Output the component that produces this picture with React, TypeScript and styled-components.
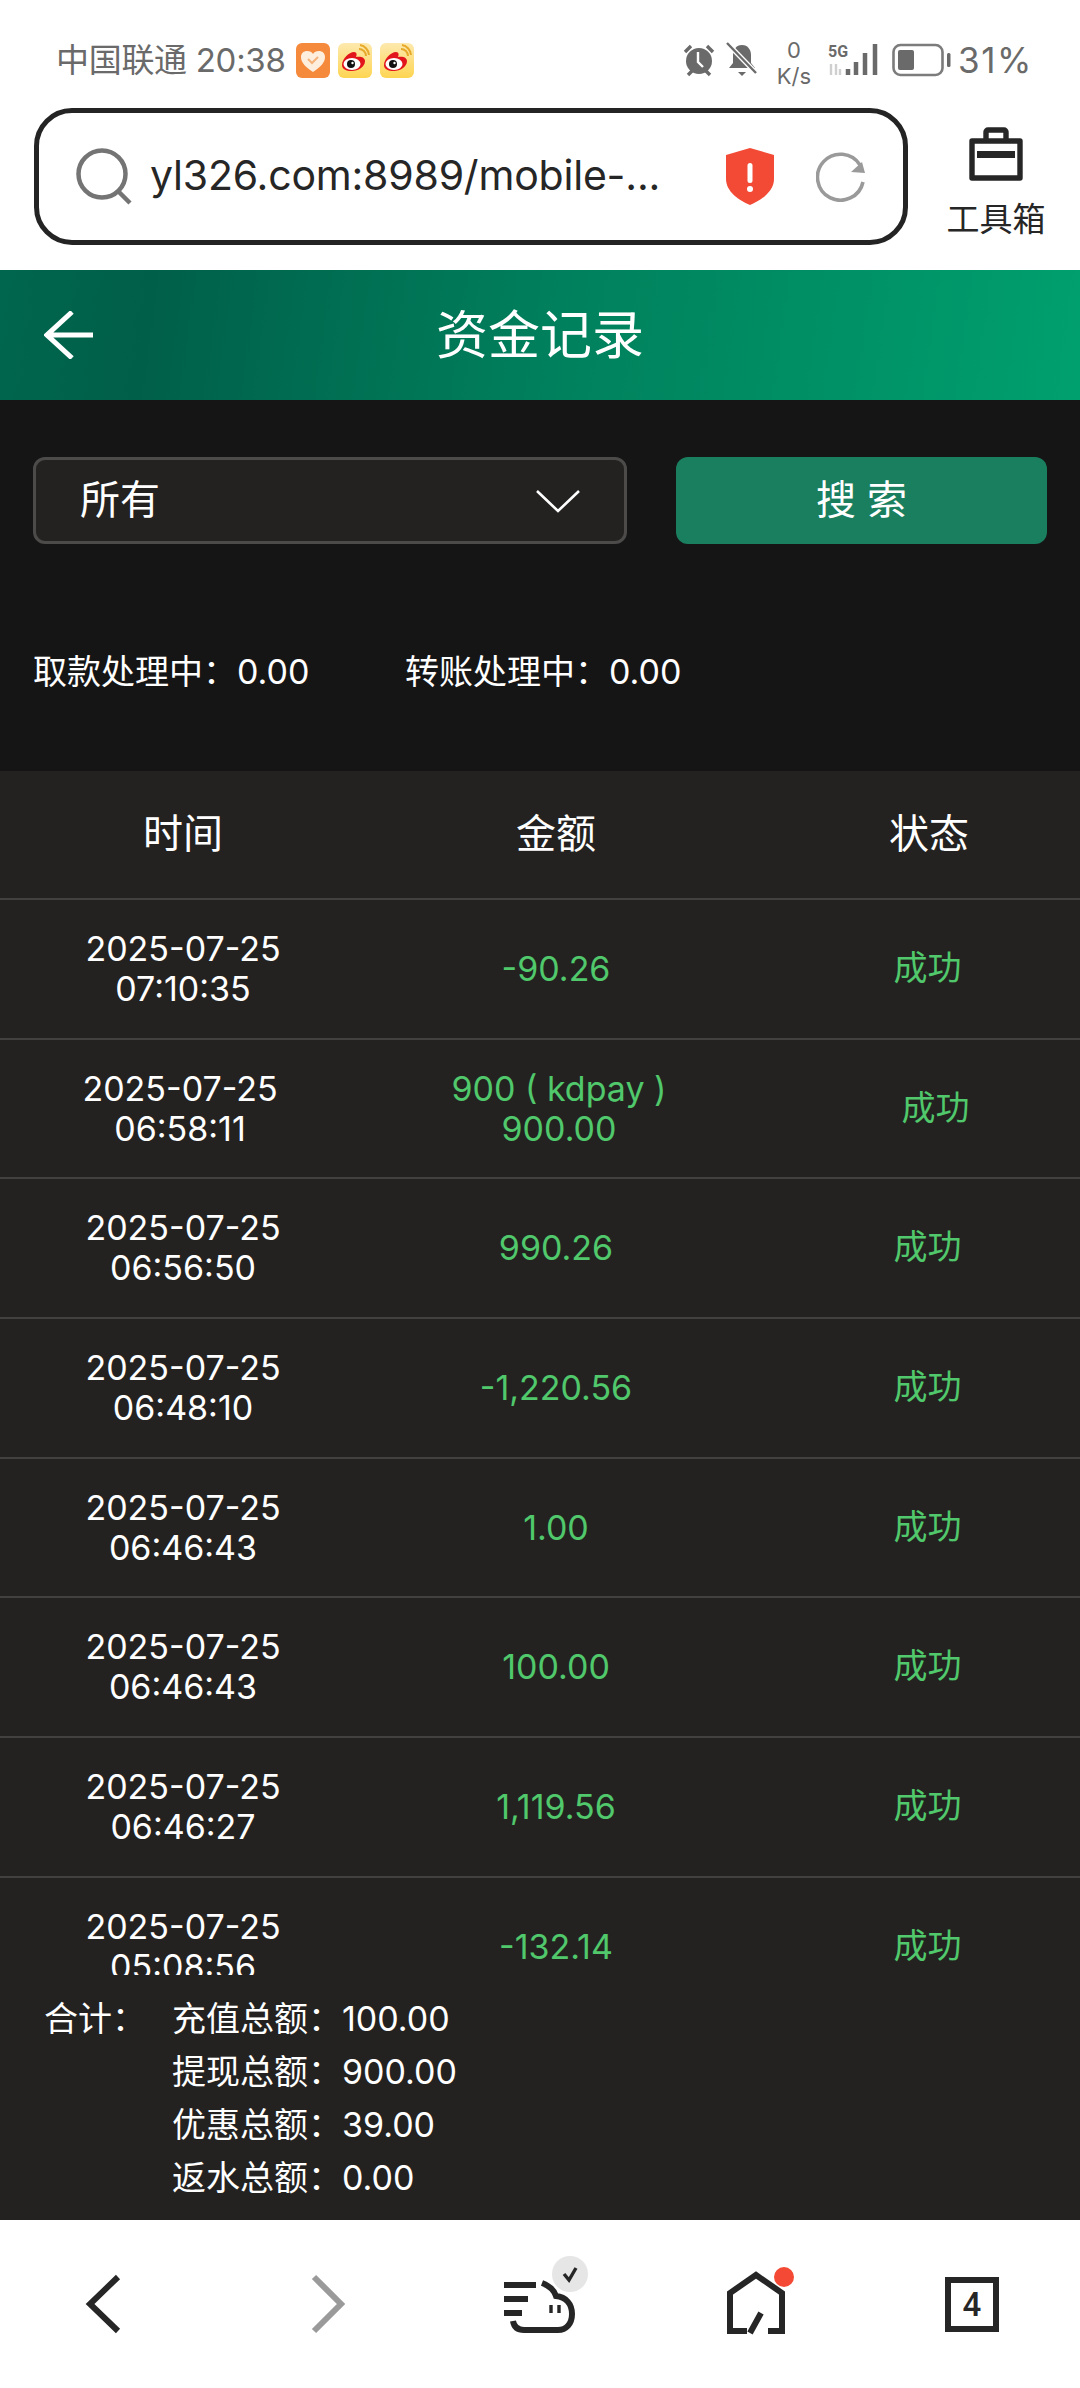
import React from 'react';
import styled, { createGlobalStyle } from 'styled-components';

const GlobalStyle = createGlobalStyle`
  html, body {
    margin: 0;
    padding: 0;
    background: #fff;
  }
  * {
    box-sizing: border-box;
  }
`;

const FONT = `Inter, "Noto Sans CJK SC", sans-serif`;

const Screen = styled.div`
  width: 1080px;
  height: 2388px;
  display: flex;
  flex-direction: column;
  overflow: hidden;
  font-family: ${FONT};
  background: #fff;
`;

const StatusBar = styled.div`
  height: 100px;
  padding: 20px 47px 0 56px;
  display: flex;
  align-items: center;
  justify-content: space-between;
  color: #6a6a6a;
`;

const StatusGroup = styled.div`
  display: flex;
  align-items: center;
`;

const Carrier = styled.span`
  font-size: 33px;
  line-height: 40px;
  margin-right: 10px;
  letter-spacing: -0.3px;
`;

const AppBadge = styled.svg`
  width: 34px;
  height: 35px;
  margin-right: 8px;
  display: block;
`;

const Speed = styled.div`
  width: 40px;
  margin: 6px 14px 0 16px;
  display: flex;
  flex-direction: column;
  align-items: center;
  font-size: 22px;
  line-height: 26px;
`;

const BatteryText = styled.span`
  font-size: 35px;
  line-height: 40px;
  margin-left: 6px;
  letter-spacing: 1.6px;
`;

const BrowserBar = styled.div`
  height: 170px;
  padding: 8px 0 0 34px;
  display: flex;
`;

const UrlBox = styled.div`
  width: 874px;
  height: 137px;
  border: 5px solid #242424;
  border-radius: 38px;
  padding: 0 37px 0 37px;
  display: flex;
  align-items: center;
`;

const UrlText = styled.span`
  flex: 1;
  margin: 0 0 4px 17px;
  font-size: 41px;
  color: #262626;
  white-space: nowrap;
  letter-spacing: -0.2px;
`;

const ToolBox = styled.div`
  flex: 1;
  display: flex;
  flex-direction: column;
  align-items: center;
  padding-top: 19px;
  padding-left: 4px;
  color: #262626;
  font-size: 33px;
`;

const ToolLabel = styled.span`
  line-height: 40px;
  margin-top: 18px;
`;

const PageHeader = styled.header`
  height: 130px;
  flex: none;
  position: relative;
  padding-bottom: 8px;
  display: flex;
  align-items: center;
  justify-content: center;
  color: #fff;
  font-size: 52px;
  background: linear-gradient(98deg, #00664e 0%, #005f49 14%, #007f5c 50%, #00a06e 100%);
`;

const BackButton = styled.svg`
  position: absolute;
  left: 44px;
  top: 41px;
  width: 50px;
  height: 48px;
`;

const FilterPanel = styled.section`
  height: 371px;
  flex: none;
  background: #161516;
  padding: 57px 0 0 33px;
  color: #fff;
`;

const FilterRow = styled.div`
  display: flex;
  gap: 49px;
`;

const SelectBox = styled.div`
  width: 594px;
  height: 87px;
  background: #232221;
  border: 3px solid #4c4b4a;
  border-radius: 12px;
  padding: 0 44px 0 44px;
  display: flex;
  align-items: center;
  justify-content: space-between;
  font-size: 40px;
`;

const SelectLabel = styled.span`
  margin-bottom: 8px;
`;

const SearchButton = styled.button`
  width: 371px;
  height: 87px;
  padding: 0 0 8px;
  border: none;
  border-radius: 12px;
  background: #1a7f5f;
  color: #fff;
  font-family: ${FONT};
  font-size: 40px;
`;

const Pending = styled.div`
  margin-top: 108px;
  display: flex;
  font-size: 34px;
  line-height: 40px;
`;

const PendingItem = styled.span`
  width: 372px;
`;

const TableHead = styled.div`
  height: 129px;
  flex: none;
  background: #232221;
  border-bottom: 2px solid #424140;
  padding-bottom: 8px;
  color: #fff;
  font-size: 40px;
  display: grid;
  grid-template-columns: 366px 380px 366px;
  align-items: center;
  text-align: center;
`;

const TableBody = styled.div`
  height: 1075px;
  flex: none;
  background: #232221;
  overflow: hidden;
`;

const Row = styled.div<{ $columns: string }>`
  height: 139.7px;
  border-bottom: 2px solid #424140;
  display: grid;
  grid-template-columns: ${(p) => p.$columns};
  align-items: center;
  text-align: center;
  font-size: 34px;
  line-height: 40px;
`;

const TimeCell = styled.div`
  color: #fff;
`;

const AmountCell = styled.div`
  color: #50c86b;
`;

const StateCell = styled.div`
  color: #50c86b;
  font-size: 34px;
  margin: 0 3px 2px 0;
`;

const Summary = styled.footer`
  height: 245px;
  flex: none;
  background: #232221;
  color: #fff;
  padding: 17px 0 0 44px;
  display: flex;
  font-size: 34px;
  line-height: 53px;
`;

const SummaryTitle = styled.div`
  width: 128px;
`;

const SummaryLine = styled.div`
  white-space: nowrap;
`;

const BottomNav = styled.nav`
  height: 168px;
  flex: none;
  background: #fff;
  display: grid;
  grid-template-columns: repeat(5, 1fr);
  align-items: center;
  justify-items: center;
`;

const NavIcon = styled.svg`
  width: 100px;
  height: 100px;
  display: block;
`;

const Weibo = () => (
  <AppBadge viewBox="0 0 34 35">
    <defs>
      <linearGradient id="wb" x1="0" y1="0" x2="0" y2="1">
        <stop offset="0" stopColor="#fde9ae" />
        <stop offset="1" stopColor="#fed552" />
      </linearGradient>
    </defs>
    <rect width="34" height="35" rx="6" fill="url(#wb)" />
    <path d="M4 22c0-6 7-13 12-13 3 0 3 3 2 5 4-1 9 0 9 4 0 6-7 10-13 10S4 26 4 22z" fill="#e3151c" />
    <ellipse cx="14" cy="21" rx="8.5" ry="6" fill="#fff" />
    <circle cx="13" cy="21" r="4" fill="#111" />
    <circle cx="14.5" cy="20" r="1.2" fill="#fff" />
    <path d="M21 6a7 7 0 0 1 7 7M22 2a11 11 0 0 1 9 10" fill="none" stroke="#e6a92a" strokeWidth="2" />
  </AppBadge>
);

const rows = [
  { time: ['2025-07-25', '07:10:35'], amount: ['-90.26'] },
  { time: ['2025-07-25', '06:58:11'], amount: ['900 ( kdpay )', '900.00'], columns: '360px 398px 358px' },
  { time: ['2025-07-25', '06:56:50'], amount: ['990.26'] },
  { time: ['2025-07-25', '06:48:10'], amount: ['-1,220.56'] },
  { time: ['2025-07-25', '06:46:43'], amount: ['1.00'] },
  { time: ['2025-07-25', '06:46:43'], amount: ['100.00'] },
  { time: ['2025-07-25', '06:46:27'], amount: ['1,119.56'] },
  { time: ['2025-07-25', '05:08:56'], amount: ['-132.14'] },
];

const totals = [
  ['充值总额：', '100.00'],
  ['提现总额：', '900.00'],
  ['优惠总额：', '39.00'],
  ['返水总额：', '0.00'],
];

const App: React.FC = () => {
  return (
    <Screen>
      <GlobalStyle />
      <StatusBar>
        <StatusGroup>
          <Carrier>中国联通 20:38</Carrier>
          <AppBadge viewBox="0 0 34 35">
            <rect width="34" height="35" rx="6" fill="#f58a3c" />
            <path d="M17 29C10 24 5 20 5 14c0-4 3-6 6-6 3 0 5 1 6 3 1-2 3-3 6-3 3 0 6 2 6 6 0 6-5 10-12 15z" fill="#fdeedd" />
            <path d="M12 16l4 4 6-6" fill="none" stroke="#f5b27a" strokeWidth="2" />
          </AppBadge>
          <Weibo />
          <Weibo />
        </StatusGroup>
        <StatusGroup>
          <svg width="34" height="34" viewBox="0 0 32 34">
            <circle cx="16" cy="18" r="13" fill="#6a6a6a" />
            <path d="M15 9v10l5 5" fill="none" stroke="#fff" strokeWidth="2.4" />
            <path d="M2 9l6-6M30 9l-6-6M5 32l4-4M27 32l-4-4" stroke="#6a6a6a" strokeWidth="3.4" />
          </svg>
          <svg width="32" height="36" viewBox="0 0 32 36" style={{ marginLeft: 10 }}>
            <path d="M16 3c6 0 9 5 9 10v8l4 5H3l4-5v-8c0-5 3-10 9-10z" fill="#6a6a6a" />
            <path d="M12 30h8l-4 4z" fill="#6a6a6a" />
            <path d="M1 1l29 30" stroke="#fff" strokeWidth="5" />
            <path d="M1 1l29 30" stroke="#6a6a6a" strokeWidth="2.4" />
          </svg>
          <Speed>
            <span>0</span>
            <span>K/s</span>
          </Speed>
          <svg width="52" height="34" viewBox="0 0 52 34">
            <text x="0" y="14" fontSize="16" fontWeight="700" fontFamily="Roboto, sans-serif" fill="#6a6a6a">5G</text>
            <path d="M3 32V21M8 32V21M12 32v-6" stroke="#cfcfcf" strokeWidth="2.4" />
            <path d="M20 32v-6M28 32V19M37 32V10M47 32V1" stroke="#6a6a6a" strokeWidth="4.5" />
          </svg>
          <svg width="60" height="34" viewBox="0 0 60 34" style={{ marginLeft: 12 }}>
            <rect x="1.5" y="2" width="49" height="30" rx="7" fill="none" stroke="#7c7c7c" strokeWidth="2.6" />
            <rect x="6" y="7" width="16" height="20" rx="2" fill="#6a6a6a" />
            <rect x="55" y="10" width="3.5" height="14" rx="1.5" fill="#6a6a6a" />
          </svg>
          <BatteryText>31%</BatteryText>
        </StatusGroup>
      </StatusBar>

      <BrowserBar>
        <UrlBox>
          <svg width="57" height="58" viewBox="0 0 57 58">
            <circle cx="26" cy="26" r="23.5" fill="none" stroke="#747474" strokeWidth="4.5" />
            <path d="M42 43l12 12" stroke="#747474" strokeWidth="4.5" />
          </svg>
          <UrlText>yl326.com:8989/mobile-...</UrlText>
          <svg width="48" height="57" viewBox="0 0 48 57" style={{ marginRight: 42 }}>
            <path d="M24 0l24 7v24c0 12-12 21-24 26C12 52 0 43 0 31V7z" fill="#f34a36" />
            <rect x="21.5" y="15" width="5" height="20" rx="2.5" fill="#fff" />
            <circle cx="24" cy="41" r="3" fill="#fff" />
          </svg>
          <svg width="50" height="50" viewBox="0 0 50 50">
            <path d="M47 30a23 23 0 1 1-3-17" fill="none" stroke="#9a9a9a" strokeWidth="3.6" />
            <path d="M35 20l14 1-3-11z" fill="#9a9a9a" />
          </svg>
        </UrlBox>
        <ToolBox>
          <svg width="54" height="54" viewBox="0 0 54 54">
            <path d="M3 14h48v37H3zM17 14V5a2 2 0 0 1 2-2h16a2 2 0 0 1 2 2v9" fill="none" stroke="#262626" strokeWidth="5.4" strokeLinejoin="round" />
            <rect x="8" y="24" width="38" height="7" fill="#262626" />
          </svg>
          <ToolLabel>工具箱</ToolLabel>
        </ToolBox>
      </BrowserBar>

      <PageHeader>
        <BackButton viewBox="0 0 50 48">
          <path d="M28 1L3 24l25 23M3 24h46" fill="none" stroke="#fff" strokeWidth="5" />
        </BackButton>
        资金记录
      </PageHeader>

      <FilterPanel>
        <FilterRow>
          <SelectBox>
            <SelectLabel>所有</SelectLabel>
            <svg width="44" height="24" viewBox="0 0 44 24">
              <path d="M1 2l21 20L43 2" fill="none" stroke="#fff" strokeWidth="2.6" />
            </svg>
          </SelectBox>
          <SearchButton>搜 索</SearchButton>
        </FilterRow>
        <Pending>
          <PendingItem>取款处理中：0.00</PendingItem>
          <PendingItem>转账处理中：0.00</PendingItem>
        </Pending>
      </FilterPanel>

      <TableHead>
        <div>时间</div>
        <div>金额</div>
        <div>状态</div>
      </TableHead>
      <TableBody>
        {rows.map((row, i) => (
          <Row key={i} $columns={row.columns || '366px 380px 366px'}>
            <TimeCell>
              {row.time.map((t) => (
                <div key={t}>{t}</div>
              ))}
            </TimeCell>
            <AmountCell>
              {row.amount.map((a) => (
                <div key={a}>{a}</div>
              ))}
            </AmountCell>
            <StateCell>成功</StateCell>
          </Row>
        ))}
      </TableBody>
      <Summary>
        <SummaryTitle>合计：</SummaryTitle>
        <div>
          {totals.map(([label, value]) => (
            <SummaryLine key={label}>
              {label}
              {value}
            </SummaryLine>
          ))}
        </div>
      </Summary>

      <BottomNav>
        <NavIcon viewBox="0 0 100 100">
          <path d="M62 23L34 50l0 0 28 27" fill="none" stroke="#262626" strokeWidth="6" transform="translate(-2 0)" />
        </NavIcon>
        <NavIcon viewBox="0 0 100 100">
          <path d="M40 23l27 27-27 27" fill="none" stroke="#9a9a9a" strokeWidth="6" />
        </NavIcon>
        <NavIcon viewBox="0 0 100 100">
          <path d="M14 31h32M14 45h24M14 59h18" stroke="#262626" strokeWidth="6" />
          <path d="M52 29c8 3 12 7 14 13 10 1 16 8 16 18 0 10-6 16-14 16H34c-6 0-10-3-11-9" fill="none" stroke="#262626" strokeWidth="6" />
          <path d="M61 51v8M69 51v8" stroke="#262626" strokeWidth="3.4" />
          <ellipse cx="80" cy="20" rx="18" ry="18" fill="#e6e6e6" />
          <path d="M74 20l5 6 7-12" fill="none" stroke="#262626" strokeWidth="3.4" />
        </NavIcon>
        <NavIcon viewBox="0 0 100 100">
          <path d="M41 77H24V39L50 21l0 0 26 18v38H62M55 59L44 79" fill="none" stroke="#262626" strokeWidth="6" />
          <circle cx="78" cy="23" r="10" fill="#f44a35" />
        </NavIcon>
        <NavIcon viewBox="0 0 100 100">
          <rect x="26" y="26" width="48" height="49" fill="none" stroke="#262626" strokeWidth="6" />
          <text x="50" y="62" textAnchor="middle" fontSize="33" fontFamily="Roboto, sans-serif" fontWeight="500" fill="#262626">4</text>
        </NavIcon>
      </BottomNav>
    </Screen>
  );
};

export default App;
